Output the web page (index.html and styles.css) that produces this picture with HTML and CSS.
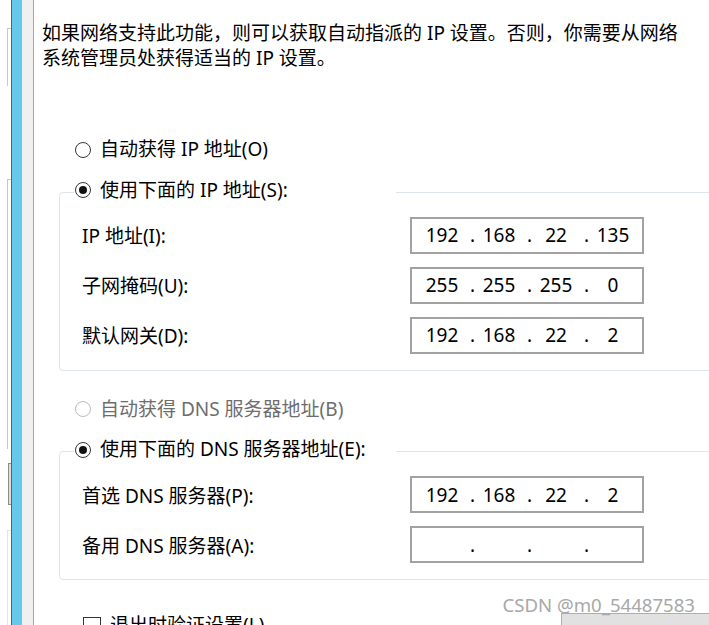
FILE: index.html
```html
<!DOCTYPE html>
<html lang="zh-CN">
<head>
    <meta charset="UTF-8">
    <meta name="viewport" content="width=device-width, initial-scale=1.0">
    <title>Internet 协议版本 4 (TCP/IPv4) 属性</title>
    <link rel="stylesheet" href="styles.css">
</head>
<body>
    <div class="window">
        <div class="behind">
            <div class="behind-frame f1"></div>
            <div class="behind-frame f2"></div>
            <div class="behind-thumb"></div>
            <div class="behind-frame f3"></div>
        </div>
        <div class="edge"></div>
        <div class="accent"></div>
        <div class="frame"></div>
        <div class="frame-line"></div>

        <main class="panel">
            <p class="intro">如果网络支持此功能，则可以获取自动指派的 IP 设置。否则，你需要从网络<br>系统管理员处获得适当的 IP 设置。</p>

            <div class="option auto-ip">
                <span class="radio"></span>
                <span>自动获得 IP 地址(O)</span>
            </div>

            <section class="group">
                <div class="option group-title">
                    <span class="radio checked"></span>
                    <span>使用下面的 IP 地址(S):</span>
                </div>
                <div class="fields">
                    <div class="field">
                        <span class="field-label">IP 地址(I):</span>
                        <div class="ip-box">
                            <span class="ip-seg">192</span><span class="ip-dot">.</span><span class="ip-seg">168</span><span class="ip-dot">.</span><span class="ip-seg">22</span><span class="ip-dot">.</span><span class="ip-seg">135</span>
                        </div>
                    </div>
                    <div class="field">
                        <span class="field-label">子网掩码(U):</span>
                        <div class="ip-box">
                            <span class="ip-seg">255</span><span class="ip-dot">.</span><span class="ip-seg">255</span><span class="ip-dot">.</span><span class="ip-seg">255</span><span class="ip-dot">.</span><span class="ip-seg">0</span>
                        </div>
                    </div>
                    <div class="field">
                        <span class="field-label">默认网关(D):</span>
                        <div class="ip-box">
                            <span class="ip-seg">192</span><span class="ip-dot">.</span><span class="ip-seg">168</span><span class="ip-dot">.</span><span class="ip-seg">22</span><span class="ip-dot">.</span><span class="ip-seg">2</span>
                        </div>
                    </div>
                </div>
            </section>

            <div class="option auto-dns disabled">
                <span class="radio"></span>
                <span>自动获得 DNS 服务器地址(B)</span>
            </div>

            <section class="group">
                <div class="option group-title">
                    <span class="radio checked"></span>
                    <span>使用下面的 DNS 服务器地址(E):</span>
                </div>
                <div class="fields">
                    <div class="field">
                        <span class="field-label">首选 DNS 服务器(P):</span>
                        <div class="ip-box">
                            <span class="ip-seg">192</span><span class="ip-dot">.</span><span class="ip-seg">168</span><span class="ip-dot">.</span><span class="ip-seg">22</span><span class="ip-dot">.</span><span class="ip-seg">2</span>
                        </div>
                    </div>
                    <div class="field">
                        <span class="field-label">备用 DNS 服务器(A):</span>
                        <div class="ip-box">
                            <span class="ip-seg"></span><span class="ip-dot">.</span><span class="ip-seg"></span><span class="ip-dot">.</span><span class="ip-seg"></span><span class="ip-dot">.</span><span class="ip-seg"></span>
                        </div>
                    </div>
                </div>
            </section>

            <div class="footer">
                <div class="option check-row">
                    <span class="checkbox"></span>
                    <span>退出时验证设置(L)</span>
                </div>
                <button class="advanced" type="button">高级(V)...</button>
            </div>
        </main>

        <div class="watermark">CSDN @m0_54487583</div>
    </div>
</body>
</html>
```

FILE: styles.css
```css
body {
    margin: 0;
    font-family: "Noto Sans", "Noto Sans CJK SC", sans-serif;
    font-size: 19px;
    color: #000;
    background-color: #fff;
    overflow: hidden;
}
.window {
    position: relative;
    display: flex;
    height: 625px;
    overflow: hidden;
}

/* window edge and the dialog behind it */
.behind {
    width: 11px;
    flex: none;
    display: flex;
    flex-direction: column;
}
.behind-frame {
    margin-left: 7px;
    border-left: 1px solid #c9c9c9;
    border-top: 1px solid #c9c9c9;
}
.f1 {
    margin-top: 28px;
    height: 57px;
}
.f2 {
    margin-top: 93px;
    height: 269px;
}
.behind-thumb {
    margin: 14px 0 0 8px;
    width: 2px;
    height: 40px;
    border: 1px solid #8c8c8c;
    background-color: #dcdcdc;
}
.f3 {
    margin-top: 25px;
    flex: 1;
    border-color: #e3e3e3;
}
.edge {
    width: 1px;
    flex: none;
    background-color: #55646c;
}
.accent {
    width: 10px;
    flex: none;
    background-color: #67c9ea;
}
.frame {
    width: 11px;
    flex: none;
    background-color: #f0f0f0;
}
.frame-line {
    width: 1px;
    flex: none;
    background-color: #a8a8a8;
}

/* dialog content */
.panel {
    flex: 1;
    min-width: 0;
    padding-left: 8px;
}
.intro {
    margin: 21px 0 0;
    line-height: 25px;
    white-space: nowrap;
}
.option {
    display: flex;
    align-items: center;
    gap: 9px;
    height: 25px;
    line-height: 25px;
    white-space: nowrap;
}
.panel > .option {
    margin-left: 33px;
}
.auto-ip {
    margin-top: 66px;
}
.auto-dns {
    margin-top: 26px;
}
.option.disabled {
    color: #6d6d6d;
}
.radio {
    width: 16px;
    height: 16px;
    box-sizing: border-box;
    border: 1px solid #333;
    border-radius: 50%;
    background-color: #fff;
    display: flex;
    align-items: center;
    justify-content: center;
    flex: none;
}
.radio.checked::after {
    content: "";
    width: 8px;
    height: 8px;
    border-radius: 50%;
    background-color: #111;
}
.disabled .radio {
    border-color: #bcbcbc;
}

.group {
    margin: 29.5px -30px 0 17px;
    padding: 0 0 16px 22px;
    border: 1px solid #dde4eb;
    border-radius: 4px;
}
.group-title {
    margin: -15px 0 0 -8px;
    padding-left: 1px;
    width: 321px;
    background-color: #fff;
}
.fields {
    display: flex;
    flex-direction: column;
    gap: 13px;
    margin-top: 14px;
}
.field {
    display: flex;
    align-items: center;
}
.field-label {
    width: 328px;
    flex: none;
    white-space: nowrap;
}
.ip-box {
    width: 234px;
    height: 37px;
    box-sizing: border-box;
    border: 2px solid #a2a2a2;
    display: flex;
    align-items: center;
    padding-left: 9px;
    background-color: #fff;
}
.ip-seg {
    width: 42px;
    text-align: center;
    flex: none;
}
.ip-dot {
    width: 15px;
    box-sizing: border-box;
    padding-left: 4px;
    text-align: center;
    flex: none;
}

.footer {
    display: flex;
    align-items: flex-start;
    margin: 33px -32px 0 0;
}
.panel > .footer .check-row {
    margin-left: 41px;
}
.checkbox {
    width: 18px;
    height: 18px;
    box-sizing: border-box;
    border: 1px solid #333;
    background-color: #fff;
    flex: none;
}
.advanced {
    margin: 0 0 0 auto;
    width: 180px;
    height: 34px;
    padding: 12px 0 0;
    border: 1px solid #adadad;
    background-color: #e1e1e1;
    font: inherit;
    line-height: 22px;
    color: #000;
}
.watermark {
    position: absolute;
    right: 14px;
    top: 591px;
    font-size: 18.6px;
    line-height: 28px;
    color: #a8a8a8;
    white-space: nowrap;
}
```
